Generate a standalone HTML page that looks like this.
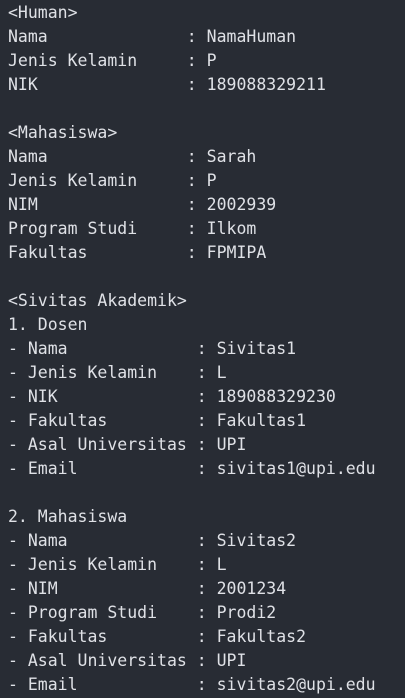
<!DOCTYPE html>
<html><head><meta charset="utf-8"><style>
html,body{margin:0;padding:0;background:#282c34;width:405px;height:698px;overflow:hidden}
pre{margin:0;padding:1px 0 0 8px;font-family:"DejaVu Sans Mono","Liberation Mono",monospace;font-size:16.5px;line-height:24px;color:#dfe1e6;white-space:pre}
</style></head><body><pre>&lt;Human&gt;
Nama              : NamaHuman
Jenis Kelamin     : P
NIK               : 189088329211

&lt;Mahasiswa&gt;
Nama              : Sarah
Jenis Kelamin     : P
NIM               : 2002939
Program Studi     : Ilkom
Fakultas          : FPMIPA

&lt;Sivitas Akademik&gt;
1. Dosen
- Nama             : Sivitas1
- Jenis Kelamin    : L
- NIK              : 189088329230
- Fakultas         : Fakultas1
- Asal Universitas : UPI
- Email            : sivitas1@upi.edu

2. Mahasiswa
- Nama             : Sivitas2
- Jenis Kelamin    : L
- NIM              : 2001234
- Program Studi    : Prodi2
- Fakultas         : Fakultas2
- Asal Universitas : UPI
- Email            : sivitas2@upi.edu</pre></body></html>
